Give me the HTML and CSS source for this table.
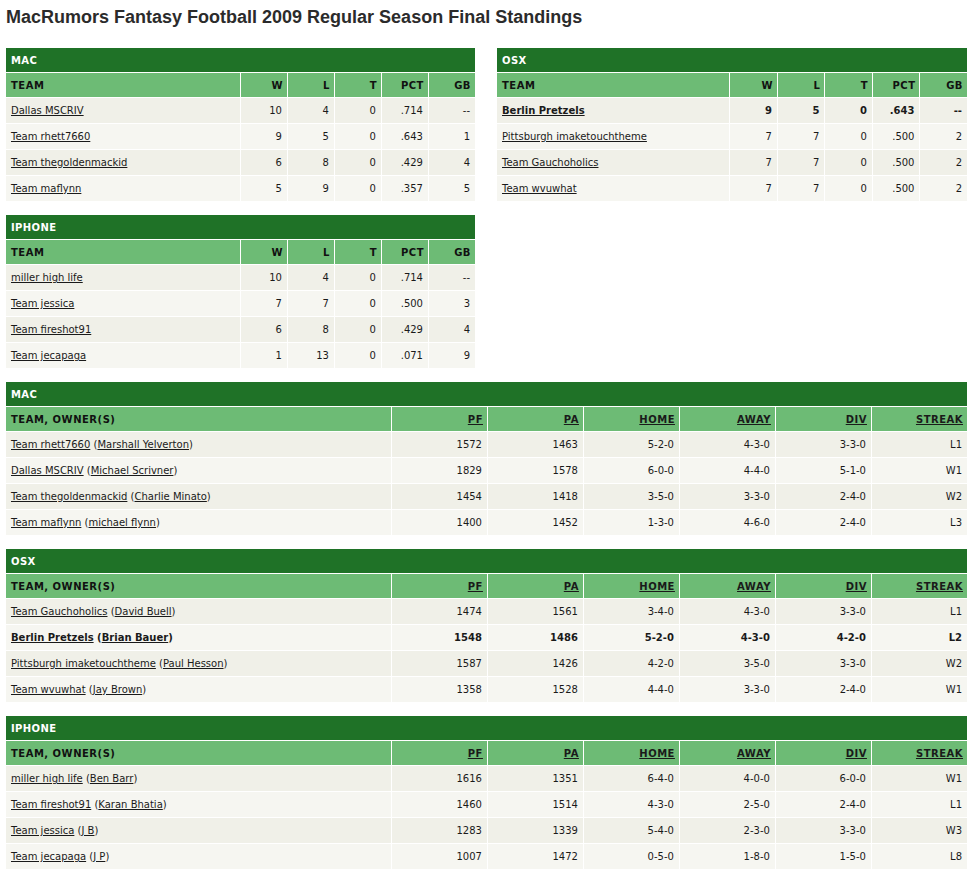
FILE: index.html
```html
<!DOCTYPE html>
<html>
<head>
<meta charset="utf-8">
<title>MacRumors Fantasy Football 2009</title>
<link rel="stylesheet" href="styles.css">
</head>
<body>
<h1 class="title">MacRumors Fantasy Football 2009 Regular Season Final Standings</h1>

<div class="top">
  <div class="col">
    <table class="standings small">
      <colgroup><col><col class="n"><col class="n"><col class="n"><col class="n"><col class="n"></colgroup>
      <tr class="div"><td colspan="6">MAC</td></tr>
      <tr class="hdr"><td class="l">TEAM</td><td>W</td><td>L</td><td>T</td><td>PCT</td><td>GB</td></tr>
      <tr><td class="l"><a href="#">Dallas MSCRIV</a></td><td>10</td><td>4</td><td>0</td><td>.714</td><td>--</td></tr>
      <tr><td class="l"><a href="#">Team rhett7660</a></td><td>9</td><td>5</td><td>0</td><td>.643</td><td>1</td></tr>
      <tr><td class="l"><a href="#">Team thegoldenmackid</a></td><td>6</td><td>8</td><td>0</td><td>.429</td><td>4</td></tr>
      <tr><td class="l"><a href="#">Team maflynn</a></td><td>5</td><td>9</td><td>0</td><td>.357</td><td>5</td></tr>
    </table>
    <table class="standings small">
      <colgroup><col><col class="n"><col class="n"><col class="n"><col class="n"><col class="n"></colgroup>
      <tr class="div"><td colspan="6">IPHONE</td></tr>
      <tr class="hdr"><td class="l">TEAM</td><td>W</td><td>L</td><td>T</td><td>PCT</td><td>GB</td></tr>
      <tr><td class="l"><a href="#">miller high life</a></td><td>10</td><td>4</td><td>0</td><td>.714</td><td>--</td></tr>
      <tr><td class="l"><a href="#">Team jessica</a></td><td>7</td><td>7</td><td>0</td><td>.500</td><td>3</td></tr>
      <tr><td class="l"><a href="#">Team fireshot91</a></td><td>6</td><td>8</td><td>0</td><td>.429</td><td>4</td></tr>
      <tr><td class="l"><a href="#">Team jecapaga</a></td><td>1</td><td>13</td><td>0</td><td>.071</td><td>9</td></tr>
    </table>
  </div>
  <div class="col">
    <table class="standings small">
      <colgroup><col><col class="n"><col class="n"><col class="n"><col class="n"><col class="n"></colgroup>
      <tr class="div"><td colspan="6">OSX</td></tr>
      <tr class="hdr"><td class="l">TEAM</td><td>W</td><td>L</td><td>T</td><td>PCT</td><td>GB</td></tr>
      <tr class="me"><td class="l"><a href="#">Berlin Pretzels</a></td><td>9</td><td>5</td><td>0</td><td>.643</td><td>--</td></tr>
      <tr><td class="l"><a href="#">Pittsburgh imaketouchtheme</a></td><td>7</td><td>7</td><td>0</td><td>.500</td><td>2</td></tr>
      <tr><td class="l"><a href="#">Team Gauchoholics</a></td><td>7</td><td>7</td><td>0</td><td>.500</td><td>2</td></tr>
      <tr><td class="l"><a href="#">Team wvuwhat</a></td><td>7</td><td>7</td><td>0</td><td>.500</td><td>2</td></tr>
    </table>
  </div>
</div>

<div class="full">
  <table class="standings big">
    <colgroup><col><col class="w"><col class="w"><col class="w"><col class="w"><col class="w"><col class="w"></colgroup>
    <tr class="div"><td colspan="7">MAC</td></tr>
    <tr class="hdr"><td class="l">TEAM, OWNER(S)</td><td><a href="#">PF</a></td><td><a href="#">PA</a></td><td><a href="#">HOME</a></td><td><a href="#">AWAY</a></td><td><a href="#">DIV</a></td><td><a href="#">STREAK</a></td></tr>
    <tr><td class="l"><a href="#">Team rhett7660</a> (<a href="#">Marshall Yelverton</a>)</td><td>1572</td><td>1463</td><td>5-2-0</td><td>4-3-0</td><td>3-3-0</td><td>L1</td></tr>
    <tr><td class="l"><a href="#">Dallas MSCRIV</a> (<a href="#">Michael Scrivner</a>)</td><td>1829</td><td>1578</td><td>6-0-0</td><td>4-4-0</td><td>5-1-0</td><td>W1</td></tr>
    <tr><td class="l"><a href="#">Team thegoldenmackid</a> (<a href="#">Charlie Minato</a>)</td><td>1454</td><td>1418</td><td>3-5-0</td><td>3-3-0</td><td>2-4-0</td><td>W2</td></tr>
    <tr><td class="l"><a href="#">Team maflynn</a> (<a href="#">michael flynn</a>)</td><td>1400</td><td>1452</td><td>1-3-0</td><td>4-6-0</td><td>2-4-0</td><td>L3</td></tr>
  </table>

  <table class="standings big">
    <colgroup><col><col class="w"><col class="w"><col class="w"><col class="w"><col class="w"><col class="w"></colgroup>
    <tr class="div"><td colspan="7">OSX</td></tr>
    <tr class="hdr"><td class="l">TEAM, OWNER(S)</td><td><a href="#">PF</a></td><td><a href="#">PA</a></td><td><a href="#">HOME</a></td><td><a href="#">AWAY</a></td><td><a href="#">DIV</a></td><td><a href="#">STREAK</a></td></tr>
    <tr><td class="l"><a href="#">Team Gauchoholics</a> (<a href="#">David Buell</a>)</td><td>1474</td><td>1561</td><td>3-4-0</td><td>4-3-0</td><td>3-3-0</td><td>L1</td></tr>
    <tr class="me"><td class="l"><a href="#">Berlin Pretzels</a> (<a href="#">Brian Bauer</a>)</td><td>1548</td><td>1486</td><td>5-2-0</td><td>4-3-0</td><td>4-2-0</td><td>L2</td></tr>
    <tr><td class="l"><a href="#">Pittsburgh imaketouchtheme</a> (<a href="#">Paul Hesson</a>)</td><td>1587</td><td>1426</td><td>4-2-0</td><td>3-5-0</td><td>3-3-0</td><td>W2</td></tr>
    <tr><td class="l"><a href="#">Team wvuwhat</a> (<a href="#">Jay Brown</a>)</td><td>1358</td><td>1528</td><td>4-4-0</td><td>3-3-0</td><td>2-4-0</td><td>W1</td></tr>
  </table>

  <table class="standings big">
    <colgroup><col><col class="w"><col class="w"><col class="w"><col class="w"><col class="w"><col class="w"></colgroup>
    <tr class="div"><td colspan="7">IPHONE</td></tr>
    <tr class="hdr"><td class="l">TEAM, OWNER(S)</td><td><a href="#">PF</a></td><td><a href="#">PA</a></td><td><a href="#">HOME</a></td><td><a href="#">AWAY</a></td><td><a href="#">DIV</a></td><td><a href="#">STREAK</a></td></tr>
    <tr><td class="l"><a href="#">miller high life</a> (<a href="#">Ben Barr</a>)</td><td>1616</td><td>1351</td><td>6-4-0</td><td>4-0-0</td><td>6-0-0</td><td>W1</td></tr>
    <tr><td class="l"><a href="#">Team fireshot91</a> (<a href="#">Karan Bhatia</a>)</td><td>1460</td><td>1514</td><td>4-3-0</td><td>2-5-0</td><td>2-4-0</td><td>L1</td></tr>
    <tr><td class="l"><a href="#">Team jessica</a> (<a href="#">J B</a>)</td><td>1283</td><td>1339</td><td>5-4-0</td><td>2-3-0</td><td>3-3-0</td><td>W3</td></tr>
    <tr><td class="l"><a href="#">Team jecapaga</a> (<a href="#">J P</a>)</td><td>1007</td><td>1472</td><td>0-5-0</td><td>1-8-0</td><td>1-5-0</td><td>L8</td></tr>
  </table>
</div>
</body>
</html>
```

FILE: styles.css
```css
html, body {
  margin: 0;
  padding: 0;
  background: #fff;
}
body {
  padding: 6px 10px 6px 6px;
  font-family: "DejaVu Sans", Verdana, sans-serif;
  font-size: 10px;
  color: #1a1a1a;
}
.title {
  margin: 0 0 20px 0;
  font-family: "Liberation Sans", Arial, sans-serif;
  font-size: 18px;
  line-height: 22px;
  font-weight: bold;
  color: #2b2b2b;
}
.top {
  display: grid;
  grid-template-columns: 469px 470px;
  column-gap: 22px;
  align-items: start;
}
.col {
  display: flex;
  flex-direction: column;
  gap: 14px;
}
.full {
  display: flex;
  flex-direction: column;
  gap: 14px;
  margin-top: 14px;
}
.standings {
  border-collapse: separate;
  border-spacing: 0;
  table-layout: fixed;
}
.small { width: 469px; }
.col:last-child .small { width: 470px; }
.big { width: 961px; }
.small col.n { width: 47px; }
.col:last-child .small col.n { width: 47.5px; }
.big col.w { width: 96px; }
.standings td {
  padding: 0 5px 0 5px;
  text-align: right;
  vertical-align: middle;
  height: 25px;
  white-space: nowrap;
  overflow: hidden;
}
.standings td + td { border-left: 1px solid #fff; }
.standings tr + tr td { border-top: 1px solid #fff; }
.standings td.l { text-align: left; }
.standings tr.div td {
  background: #1f7227;
  color: #fff;
  font-weight: bold;
  text-align: left;
  height: 24px;
  padding-left: 5px;
  letter-spacing: 0.4px;
}
.standings tr.hdr td {
  background: #6dbb75;
  font-weight: bold;
  color: #111;
  height: 24px;
  letter-spacing: 0.5px;
}
.standings tr.hdr td:not(.l) { padding-right: 4px; }
.standings tr:nth-child(odd):not(.div):not(.hdr) td { background: #f0f0e8; }
.standings tr:nth-child(even):not(.div):not(.hdr) td { background: #f6f6f1; }
.standings a {
  color: #1a1a1a;
  text-decoration: underline;
}
.standings tr.me td { font-weight: bold; }
```
